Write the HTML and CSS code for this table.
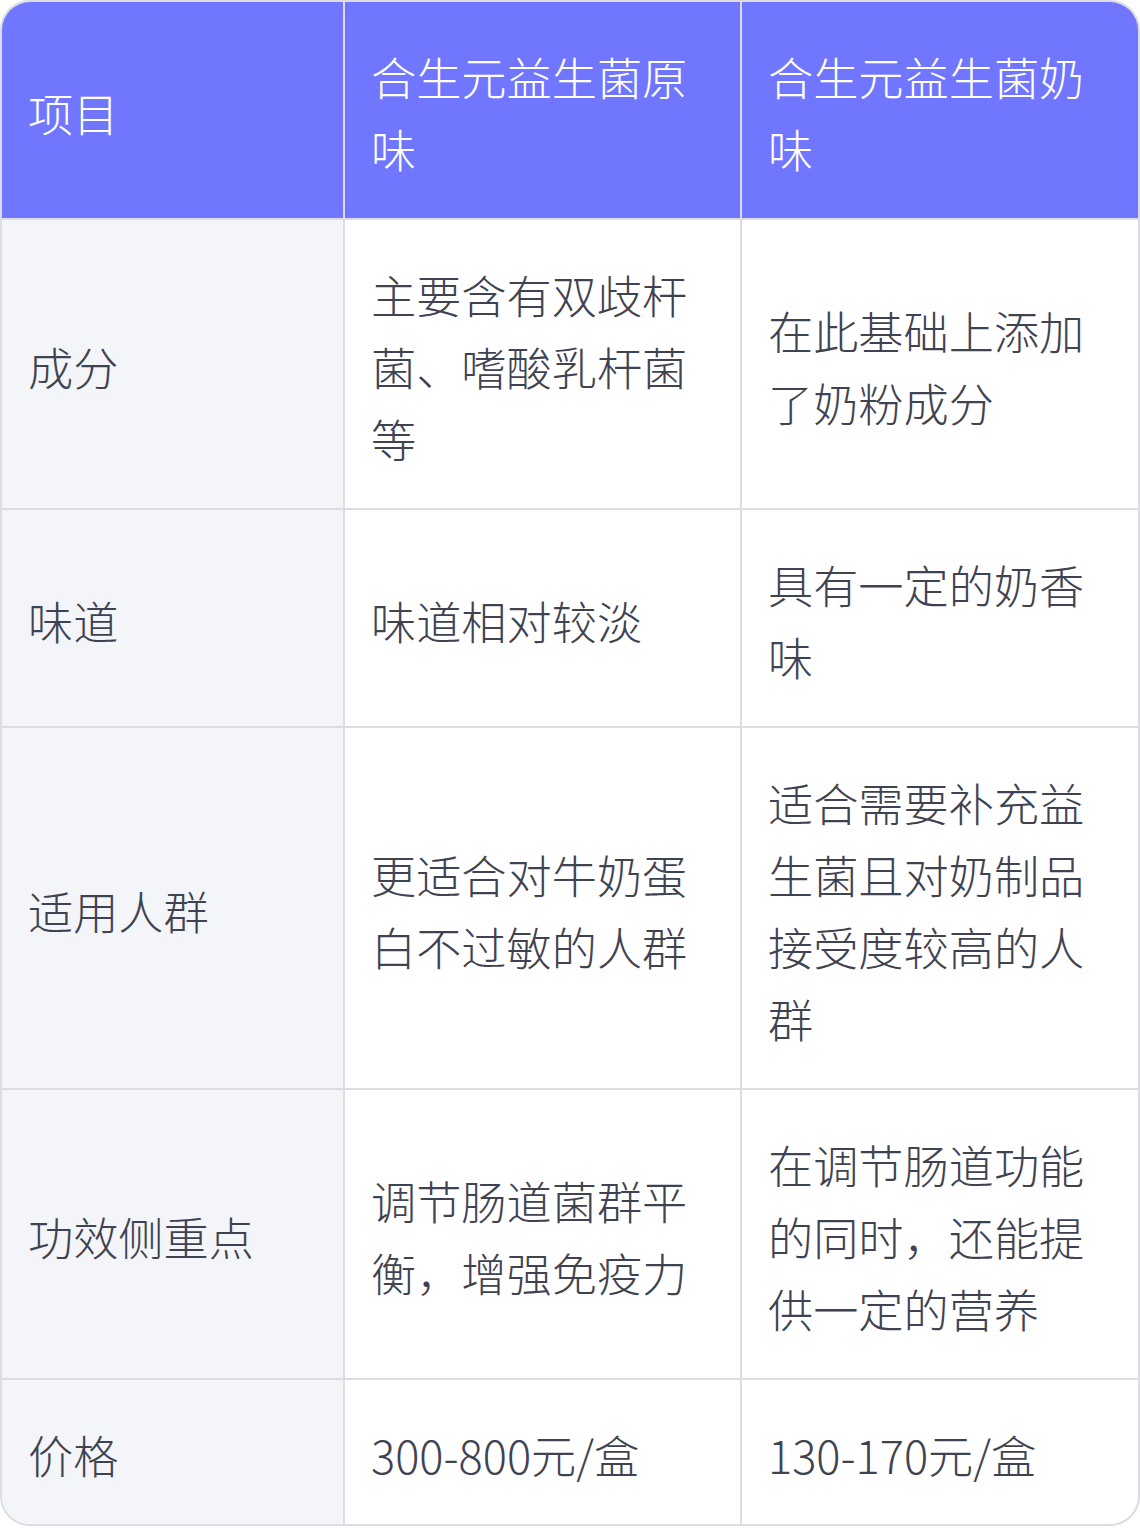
FILE: index.html
```html
<!DOCTYPE html>
<html lang="zh-CN">
<head>
<meta charset="utf-8">
<link rel="stylesheet" href="styles.css">
</head>
<body>
<div class="wrap">
<table class="cmp">
<colgroup><col class="c1"><col class="c2"><col class="c3"></colgroup>
<thead>
<tr><th>项目</th><th>合生元益生菌原味</th><th>合生元益生菌奶味</th></tr>
</thead>
<tbody>
<tr><td>成分</td><td>主要含有双歧杆菌、嗜酸乳杆菌等</td><td>在此基础上添加了奶粉成分</td></tr>
<tr><td>味道</td><td>味道相对较淡</td><td>具有一定的奶香味</td></tr>
<tr><td>适用人群</td><td>更适合对牛奶蛋白不过敏的人群</td><td>适合需要补充益生菌且对奶制品接受度较高的人群</td></tr>
<tr><td>功效侧重点</td><td>调节肠道菌群平衡，增强免疫力</td><td>在调节肠道功能的同时，还能提供一定的营养</td></tr>
<tr><td>价格</td><td>300-800元/盒</td><td>130-170元/盒</td></tr>
</tbody>
</table>
</div>
</body>
</html>
```

FILE: styles.css
```css
html, body { margin: 0; padding: 0; background: #ffffff; }
body { font-family: "Noto Sans CJK SC", "Noto Sans", sans-serif; }
.wrap {
  width: 1140px;
  box-sizing: border-box;
  border: 2px solid #dcdde3;
  border-radius: 30px;
  overflow: hidden;
}
.cmp {
  width: 1136px;
  table-layout: fixed;
  border-collapse: separate;
  border-spacing: 0;
  font-size: 45.2px;
  line-height: 72px;
  font-weight: 300;
  color: #3f4351;
}
.c1 { width: 343px; }
.c2 { width: 397px; }
.c3 { width: 396px; }
.cmp th, .cmp td {
  padding: 39px 26px 33px 26px;
  text-align: left;
  vertical-align: middle;
  border-right: 2px solid #dcdde3;
  border-bottom: 2px solid #dcdde3;
  font-weight: 300;
  word-break: break-all;
}
.cmp th:last-child, .cmp td:last-child { border-right: none; }
.cmp tbody tr:last-child td { border-bottom: none; }
.cmp th { background: #7176ff; color: #ffffff; }
.cmp td:first-child { background: #f4f5f9; }
```
